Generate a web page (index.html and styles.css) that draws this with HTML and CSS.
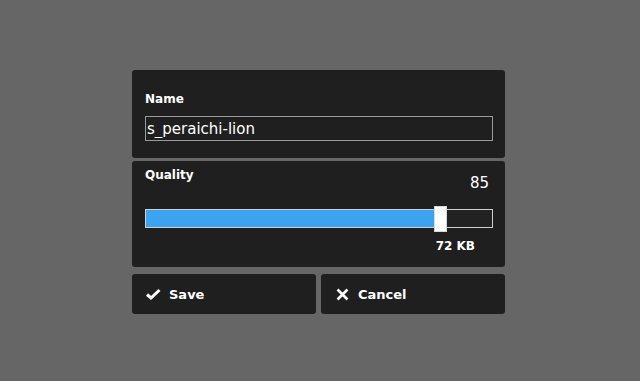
FILE: index.html
```html
<!DOCTYPE html>
<html>
<head>
<meta charset="UTF-8">
<meta name="viewport" content="width=device-width, initial-scale=1.0">
<title>Export</title>
<link rel="stylesheet" href="styles.css">
</head>
<body>
    <div class="dialog">

        <!-- file name -->
        <div class="panel name-panel">
            <label class="field-label" for="file-name">Name</label>
            <input class="name-input" id="file-name" type="text" value="s_peraichi-lion">
        </div>

        <!-- quality slider -->
        <div class="panel quality-panel">
            <div class="quality-head">
                <span class="field-label">Quality</span>
                <span class="quality-value">85</span>
            </div>
            <div class="slider">
                <div class="slider-fill" style="width: 85%"></div>
                <div class="slider-thumb" style="left: 85%"></div>
            </div>
            <div class="file-size">72 KB</div>
        </div>

        <div class="actions">
            <button class="action-btn">
                <span class="btn-icon">
                    <svg width="16" height="12" viewBox="0 0 16 12"><polyline points="2,6.5 6,10 14.5,2" fill="none" stroke="#fff" stroke-width="3" stroke-linejoin="miter"/></svg>
                </span>
                Save
            </button>
            <button class="action-btn">
                <span class="btn-icon">
                    <svg width="13" height="13" viewBox="0 0 13 13"><path d="M1.5 1.5 L11.5 11.5 M11.5 1.5 L1.5 11.5" fill="none" stroke="#fff" stroke-width="2.6"/></svg>
                </span>
                Cancel
            </button>
        </div>

    </div>
</body>
</html>
```

FILE: styles.css
```css
html, body {
    margin: 0;
    height: 100%;
}

body {
    background-color: #666666;
    font-family: "DejaVu Sans", Verdana, sans-serif;
    color: #fff;
}

.dialog {
    width: 373px;
    margin: 70px 0 0 132px;
    display: flex;
    flex-direction: column;
}

.panel {
    background-color: #1f1f1f;
    border-radius: 3px;
    box-sizing: border-box;
    padding: 0 12px 0 13px;
}

.field-label {
    display: block;
    font-size: 12px;
    line-height: 15px;
    font-weight: bold;
}

.name-panel {
    height: 88px;
    padding-top: 22px;
}

.name-input {
    display: block;
    margin-top: 9px;
    width: 100%;
    height: 25px;
    box-sizing: border-box;
    background-color: #1f1f1f;
    border: 1px solid #9a9a9a;
    color: #fff;
    font-family: "DejaVu Sans", Verdana, sans-serif;
    font-size: 15px;
    padding: 0 1px;
    outline: none;
}

.quality-panel {
    height: 106px;
    margin-top: 3px;
    padding-top: 7px;
}

.quality-head {
    display: flex;
    justify-content: space-between;
    align-items: flex-start;
    height: 24px;
}

.quality-value {
    font-size: 15px;
    line-height: 18px;
    margin-top: 6px;
    margin-right: 4px;
}

.slider {
    position: relative;
    margin-top: 17px;
    height: 19px;
    box-sizing: border-box;
    border: 1px solid #cfcfcf;
    background-color: #222;
}

.slider-fill {
    height: 100%;
    background-color: #3ca3f0;
}

.slider-thumb {
    position: absolute;
    top: -4px;
    width: 13px;
    height: 26px;
    margin-left: -6px;
    box-sizing: border-box;
    background-color: #fff;
    border: 1px solid #d8d8d8;
}

.file-size {
    margin-top: 11px;
    margin-right: 18px;
    text-align: right;
    font-size: 12px;
    line-height: 15px;
    font-weight: bold;
}

.actions {
    display: flex;
    gap: 5px;
    margin-top: 7px;
}

.action-btn {
    flex: 1;
    height: 40px;
    display: flex;
    align-items: center;
    gap: 8px;
    padding: 0 13px;
    background-color: #1f1f1f;
    border: none;
    border-radius: 3px;
    color: #fff;
    font-family: "DejaVu Sans", Verdana, sans-serif;
    font-size: 13px;
    font-weight: bold;
    cursor: pointer;
}

.btn-icon {
    width: 16px;
    display: flex;
    justify-content: center;
}
```
